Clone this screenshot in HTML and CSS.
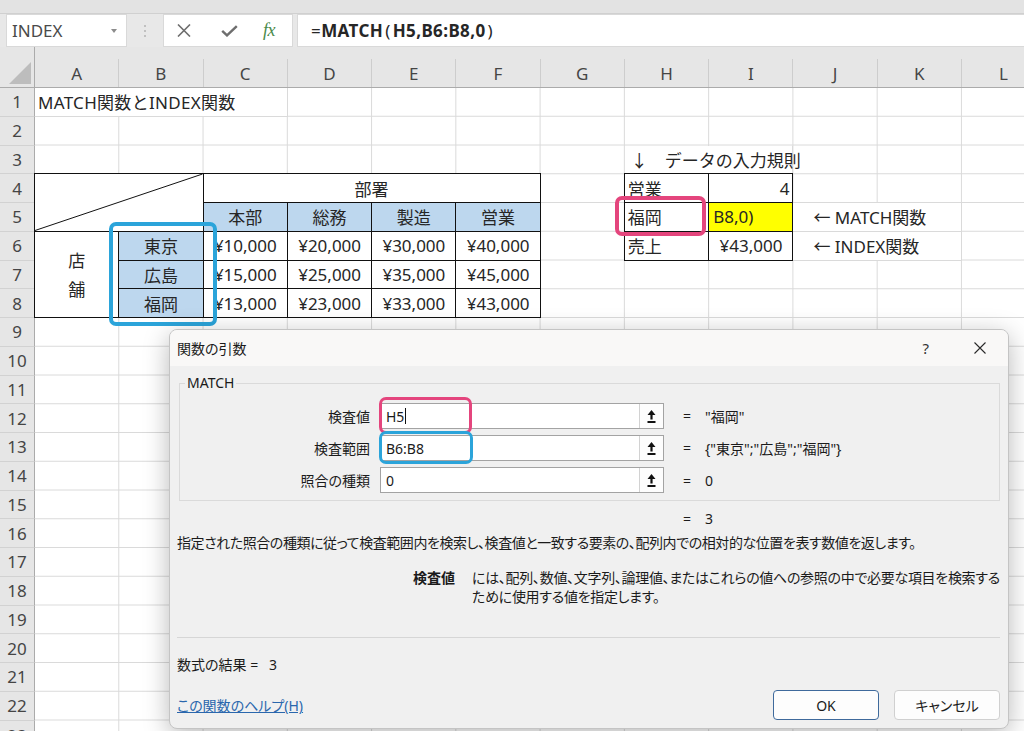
FILE: index.html
```html
<!DOCTYPE html>
<html lang="ja">
<head>
<meta charset="utf-8">
<title>MATCH関数とINDEX関数</title>
<link rel="stylesheet" href="styles.css">
</head>
<body>
<div class="app">
  <div class="topstrip"></div>
  <div class="fbar">
    <div class="namebox"><span>INDEX</span><span class="caret"></span></div>
    <div class="grip"><i></i><i></i><i></i></div>
    <div class="fbtns">
      <svg class="ic-x" width="14" height="13" viewBox="0 0 14 13"><path d="M1 0.5L13 12.5M13 0.5L1 12.5" stroke="#6e6e6e" stroke-width="1.6" fill="none"/></svg>
      <svg class="ic-check" width="17" height="12" viewBox="0 0 17 12"><path d="M1.2 5.8L6 10.4L15.8 1.2" fill="none" stroke="#6e6e6e" stroke-width="2.4"/></svg>
      <span class="fx">fx</span>
    </div>
    <div class="formula"><span class="thin">=</span><b>MATCH</b><span class="thin paren">(</span><b>H5,B6:B8,0</b><span class="thin paren">)</span></div>
  </div>

  <div class="sheet">
    <div class="corner"><i></i></div>
    <div class="ch"><span>A</span></div>
    <div class="ch"><span>B</span></div>
    <div class="ch"><span>C</span></div>
    <div class="ch"><span>D</span></div>
    <div class="ch"><span>E</span></div>
    <div class="ch"><span>F</span></div>
    <div class="ch"><span>G</span></div>
    <div class="ch"><span>H</span></div>
    <div class="ch"><span>I</span></div>
    <div class="ch"><span>J</span></div>
    <div class="ch"><span>K</span></div>
    <div class="ch"><span>L</span></div>

    <div class="rh">1</div>
    <div class="rh">2</div>
    <div class="rh">3</div>
    <div class="rh">4</div>
    <div class="rh">5</div>
    <div class="rh">6</div>
    <div class="rh">7</div>
    <div class="rh">8</div>
    <div class="rh">9</div>
    <div class="rh">10</div>
    <div class="rh">11</div>
    <div class="rh">12</div>
    <div class="rh">13</div>
    <div class="rh">14</div>
    <div class="rh">15</div>
    <div class="rh">16</div>
    <div class="rh">17</div>
    <div class="rh">18</div>
    <div class="rh">19</div>
    <div class="rh">20</div>
    <div class="rh">21</div>
    <div class="rh">22</div>
    <div class="rh last">23</div>

    <div class="cell r1 cA sp3 txt title">MATCH関数とINDEX関数</div>
    <div class="cell r3 cH sp2 txt note"><span class="cjk">↓</span><span class="cjk">　データの入力規則</span></div>

    <div class="cell tb r4 cA sp2 rs2 tt ll diag">
      <svg viewBox="0 0 100 100" preserveAspectRatio="none"><line x1="0" y1="100" x2="100" y2="0" stroke="#111" stroke-width="1" vector-effect="non-scaling-stroke"/></svg>
    </div>
    <div class="cell tb r4 cC sp4 tt ctr">部署</div>
    <div class="cell tb r5 cC hd ctr">本部</div>
    <div class="cell tb r5 cD hd ctr">総務</div>
    <div class="cell tb r5 cE hd ctr">製造</div>
    <div class="cell tb r5 cF hd ctr">営業</div>

    <div class="cell tb r6 cA rs3 ll ctr store"><span>店</span><span>舗</span></div>
    <div class="cell tb r6 cB hd ctr">東京</div>
    <div class="cell tb r7 cB hd ctr">広島</div>
    <div class="cell tb r8 cB hd ctr">福岡</div>

    <div class="cell tb r6 cC num">¥10,000</div>
    <div class="cell tb r6 cD num">¥20,000</div>
    <div class="cell tb r6 cE num">¥30,000</div>
    <div class="cell tb r6 cF num">¥40,000</div>
    <div class="cell tb r7 cC num">¥15,000</div>
    <div class="cell tb r7 cD num">¥25,000</div>
    <div class="cell tb r7 cE num">¥35,000</div>
    <div class="cell tb r7 cF num">¥45,000</div>
    <div class="cell tb r8 cC num">¥13,000</div>
    <div class="cell tb r8 cD num">¥23,000</div>
    <div class="cell tb r8 cE num">¥33,000</div>
    <div class="cell tb r8 cF num">¥43,000</div>

    <div class="cell tb r4 cH tt ll txt">営業</div>
    <div class="cell tb r4 cI tt num gen">4</div>
    <div class="cell tb r5 cH ll txt">福岡</div>
    <div class="cell tb r5 cI yl txt edit">B8,0)</div>
    <div class="cell tb r6 cH ll txt">売上</div>
    <div class="cell tb r6 cI num">¥43,000</div>

    <div class="cell r5 cJ sp2 txt arrow"><span class="cjk">←</span>&nbsp;MATCH関数</div>
    <div class="cell r6 cJ sp2 txt arrow"><span class="cjk">←</span>&nbsp;INDEX関数</div>
  </div>

  <div class="mark pink sheet-pink"></div>
  <div class="mark blue sheet-blue"></div>

  <div class="dialog">
    <div class="dlg-title">
      <span class="dlg-name">関数の引数</span>
      <span class="dlg-help">?</span>
      <svg class="dlg-close" width="12" height="12" viewBox="0 0 12 12"><path d="M0.5 0.5L11.5 11.5M11.5 0.5L0.5 11.5" stroke="#2a2a2a" stroke-width="1.1" fill="none"/></svg>
    </div>

    <fieldset class="group">
      <legend>MATCH</legend>
      <div class="args">
        <div class="lbl">検査値</div>
        <div class="inp"><span>H5</span><i class="cursor"></i><span class="upbtn"><svg width="9" height="13" viewBox="0 0 9 13"><path d="M4.5 0L8.5 5H5.6V9.6H3.4V5H0.5Z" fill="#111"/><rect x="0.5" y="11" width="8" height="2" fill="#111"/></svg></span></div>
        <div class="val"><span>=</span><span>"福岡"</span></div>

        <div class="lbl">検査範囲</div>
        <div class="inp"><span>B6:B8</span><span class="upbtn"><svg width="9" height="13" viewBox="0 0 9 13"><path d="M4.5 0L8.5 5H5.6V9.6H3.4V5H0.5Z" fill="#111"/><rect x="0.5" y="11" width="8" height="2" fill="#111"/></svg></span></div>
        <div class="val"><span>=</span><span>{"東京";"広島";"福岡"}</span></div>

        <div class="lbl">照合の種類</div>
        <div class="inp"><span>0</span><span class="upbtn"><svg width="9" height="13" viewBox="0 0 9 13"><path d="M4.5 0L8.5 5H5.6V9.6H3.4V5H0.5Z" fill="#111"/><rect x="0.5" y="11" width="8" height="2" fill="#111"/></svg></span></div>
        <div class="val"><span>=</span><span>0</span></div>
      </div>
    </fieldset>

    <div class="result"><span>=</span><span>3</span></div>
    <p class="desc">指定された照合の種類に従って検査範囲内を検索し、検査値と一致する要素の、配列内での相対的な位置を表す数値を返します。</p>
    <div class="argdesc">
      <span class="ad-lbl">検査値</span>
      <span class="ad-txt">には、配列、数値、文字列、論理値、またはこれらの値への参照の中で必要な項目を検索する<br>ために使用する値を指定します。</span>
    </div>
    <div class="sep"></div>
    <div class="formres">数式の結果 =&nbsp;&nbsp;&nbsp;3</div>
    <div class="dlg-foot">
      <a class="help" href="#">この関数のヘルプ(H)</a>
      <button class="btn ok" type="button">OK</button>
      <button class="btn" type="button">キャンセル</button>
    </div>
  </div>

  <div class="mark pink dlg-pink"></div>
  <div class="mark blue dlg-blue"></div>
</div>
</body>
</html>
```

FILE: styles.css
```css
:root {
  --grid: #dadada;
  --hdr: #e6e6e6;
}
* { box-sizing: border-box; }
html, body { margin: 0; padding: 0; }
body {
  width: 1024px;
  height: 731px;
  overflow: hidden;
  background: #fff;
  color: #262626;
  font-family: "Noto Sans", "Noto Sans CJK JP", sans-serif;
}
.cjk { font-family: "Noto Sans CJK JP", sans-serif; }

.app {
  position: relative;
  width: 1024px;
  height: 731px;
  overflow: hidden;
  display: flex;
  flex-direction: column;
}

/* ---------- formula bar ---------- */
.topstrip {
  flex: none;
  height: 14px;
  background: #e3e3e3;
  border-bottom: 1px solid #d0d0d0;
}
.fbar {
  flex: none;
  height: 33px;
  display: flex;
  background: #e8e8e8;
}
.namebox {
  margin-left: 6px;
  width: 121px;
  background: #fff;
  border: 1px solid #d9d9d9;
  display: flex;
  align-items: center;
  padding: 0 9px 0 5px;
  font-size: 17px;
  color: #4a4a4a;
}
.namebox .caret {
  margin-left: auto;
  width: 0;
  height: 0;
  border-left: 3px solid transparent;
  border-right: 3px solid transparent;
  border-top: 4px solid #8c8c8c;
}
.grip {
  width: 36px;
  display: flex;
  flex-direction: column;
  align-items: center;
  justify-content: center;
  gap: 3px;
}
.grip i {
  display: block;
  width: 2px;
  height: 2px;
  border-radius: 1px;
  background: #b3b3b3;
}
.fbtns {
  width: 130px;
  background: #fff;
  border: 1px solid #d9d9d9;
  display: flex;
  align-items: center;
  padding-left: 13px;
}
.ic-check { margin-left: 30px; }
.fx {
  margin-left: 25px;
  font-family: "Liberation Serif", serif;
  font-style: italic;
  font-size: 18px;
  color: #4a8a4a;
  letter-spacing: -0.5px;
}
.formula {
  flex: 1;
  margin-left: 4px;
  background: #fff;
  border: 1px solid #d9d9d9;
  border-right: none;
  display: flex;
  align-items: center;
  padding-left: 13px;
  font-size: 17px;
  color: #262626;
  letter-spacing: 0.4px;
}
.formula b { font-weight: 700; }
.formula .thin { font-weight: 400; }
.formula .paren { padding: 0 2px; }

/* ---------- sheet ---------- */
.sheet {
  flex: 1;
  display: grid;
  grid-template-columns: 35px repeat(12, 84.27px);
  grid-template-rows: 41px repeat(23, 28.75px);
  overflow: hidden;
  background-color: #fff;
  background-image:
    linear-gradient(to right, transparent calc(100% - 1px), var(--grid) calc(100% - 1px)),
    linear-gradient(to bottom, transparent calc(100% - 1px), var(--grid) calc(100% - 1px));
  background-size: 84.27px 28.75px;
  background-position: 35px 41px;
}
.corner {
  background: var(--hdr);
  border-right: 1px solid #ababab;
  border-bottom: 1px solid #ababab;
  display: flex;
  align-items: flex-end;
  justify-content: flex-end;
  padding: 0 3px 3px 0;
}
.corner i {
  display: block;
  width: 22px;
  height: 22px;
  background: #bdbdbd;
  clip-path: polygon(100% 0, 100% 100%, 0 100%);
}
.ch {
  background: var(--hdr);
  border-bottom: 1px solid #ababab;
  display: flex;
  align-items: flex-end;
}
.ch span {
  flex: 1;
  height: 28px;
  border-right: 1px solid #cdcdcd;
  display: flex;
  align-items: center;
  justify-content: center;
  font-size: 17px;
  color: #454545;
}
.rh {
  grid-column: 1;
  background: var(--hdr);
  border-right: 1px solid #ababab;
  border-bottom: 1px solid #d2d2d2;
  display: flex;
  align-items: center;
  justify-content: center;
  font-size: 17px;
  color: #454545;
}
.rh.last { align-items: flex-start; padding-top: 3px; }

.r1 { grid-row-start: 2; }
.r3 { grid-row-start: 4; }
.r4 { grid-row-start: 5; }
.r5 { grid-row-start: 6; }
.r6 { grid-row-start: 7; }
.r7 { grid-row-start: 8; }
.r8 { grid-row-start: 9; }
.cA { grid-column-start: 2; }
.cB { grid-column-start: 3; }
.cC { grid-column-start: 4; }
.cD { grid-column-start: 5; }
.cE { grid-column-start: 6; }
.cF { grid-column-start: 7; }
.cH { grid-column-start: 9; }
.cI { grid-column-start: 10; }
.cJ { grid-column-start: 11; }
.sp2 { grid-column-end: span 2; }
.sp3 { grid-column-end: span 3; }
.sp4 { grid-column-end: span 4; }
.rs2 { grid-row-end: span 2; }
.rs3 { grid-row-end: span 3; }

.cell {
  background: #fff;
  border-right: 1px solid var(--grid);
  border-bottom: 1px solid var(--grid);
  display: flex;
  align-items: center;
  padding: 0 3px;
  white-space: nowrap;
  font-size: 17px;
  color: #262626;
  min-width: 0;
}
.txt { padding-left: 3px; }
.title { letter-spacing: 0.3px; }
.note { overflow: visible; padding-left: 6px; }
.tb { border-right-color: #111; border-bottom-color: #111; }
.tt { border-top: 1px solid #111; margin-top: -1px; }
.ll { border-left: 1px solid #111; margin-left: -1px; }
.ctr { justify-content: center; }
.num { justify-content: flex-end; padding-right: 10px; }
.num.gen { padding-right: 3px; }
.hd { background: #bdd7ee; }
.yl { background: #ffff00; }
.edit { padding-left: 4px; }
.diag { padding: 0; }
.diag svg { display: block; width: 100%; height: 100%; }
.store {
  flex-direction: column;
  line-height: 29px;
  font-family: "Noto Sans CJK JP", sans-serif;
}
.arrow { padding-left: 20px; }

/* ---------- highlight marks ---------- */
.mark {
  position: absolute;
  border-radius: 7px;
  border-style: solid;
  pointer-events: none;
}
.pink { border-color: #e4457d; }
.blue { border-color: #2ba4da; }
.sheet-pink { left: 615px; top: 196px; width: 91px; height: 40px; border-width: 4px; }
.sheet-blue { left: 109px; top: 222px; width: 108px; height: 104px; border-width: 4px; }
.dlg-pink { left: 379px; top: 397px; width: 93px; height: 37px; border-width: 3px; }
.dlg-blue { left: 379px; top: 431px; width: 94px; height: 33px; border-width: 3px; }

/* ---------- dialog ---------- */
.dialog {
  position: absolute;
  left: 169px;
  top: 329px;
  width: 840px;
  height: 400px;
  border: 1px solid #c4c4c4;
  border-radius: 8px;
  background: #f0f0f0;
  box-shadow: 0 6px 26px rgba(0, 0, 0, 0.28);
  overflow: hidden;
  display: flex;
  flex-direction: column;
  font-family: "Noto Sans", "Noto Sans CJK JP", sans-serif;
  font-feature-settings: "palt";
  font-size: 14px;
  color: #1b1b1b;
}
.dlg-title {
  flex: none;
  height: 36px;
  display: flex;
  align-items: center;
  padding: 0 22px 0 7px;
  background: #f9f8f7;
}
.dlg-help { margin-left: auto; font-size: 15px; color: #333; }
.dlg-close { margin-left: 45px; }

.group {
  margin: 8px 8px 0 9px;
  padding: 11px 0 7px;
  border: 1px solid #dadada;
  min-width: 0;
}
.group legend {
  margin-left: 5px;
  padding: 0 2px;
  line-height: 18px;
  font-size: 14px;
}
.args {
  display: grid;
  grid-template-columns: 190px 284px 1fr;
  grid-auto-rows: 26px;
  column-gap: 10px;
  row-gap: 6px;
  align-items: center;
}
.lbl { text-align: right; }
.inp {
  height: 26px;
  display: flex;
  align-items: center;
  background: #fff;
  border: 1px solid #a3a3a3;
  padding-left: 5px;
}
.cursor {
  display: block;
  width: 1px;
  height: 16px;
  margin-left: 1px;
  background: #111;
}
.upbtn {
  margin-left: auto;
  width: 24px;
  height: 24px;
  border-left: 1px solid #d2d2d2;
  background: #fdfdfd;
  display: flex;
  align-items: center;
  justify-content: center;
}
.val {
  display: flex;
  gap: 14px;
  margin-left: 9px;
}

.result {
  display: flex;
  gap: 14px;
  margin-top: 8px;
  padding-left: 513px;
  line-height: 20px;
}
.desc {
  margin: 4px 0 0;
  padding-left: 7px;
  line-height: 19px;
  white-space: nowrap;
  letter-spacing: -0.43px;
}
.argdesc {
  display: flex;
  margin-top: 16px;
  line-height: 19px;
}
.ad-lbl {
  flex: none;
  width: 285px;
  text-align: right;
  font-weight: 700;
}
.ad-txt {
  margin-left: 17px;
  white-space: nowrap;
  letter-spacing: -0.3px;
}
.sep {
  height: 1px;
  margin: 31px 8px 0 7px;
  background: #d6d6d6;
}
.formres {
  margin-top: 17px;
  padding-left: 7px;
  line-height: 19px;
}
.dlg-foot {
  margin-top: 16px;
  display: flex;
  align-items: center;
  gap: 15px;
  padding: 0 8px 0 7px;
}
.help {
  margin-right: auto;
  color: #2a67ad;
  text-decoration: underline;
}
.btn {
  width: 106px;
  height: 30px;
  border: 1px solid #d0d0d0;
  border-radius: 4px;
  background: #fdfdfd;
  font-family: "Noto Sans", "Noto Sans CJK JP", sans-serif;
  font-feature-settings: "palt";
  font-size: 14px;
  color: #1b1b1b;
  padding: 0;
}
.btn.ok { border-color: #3f6a9c; }
```
